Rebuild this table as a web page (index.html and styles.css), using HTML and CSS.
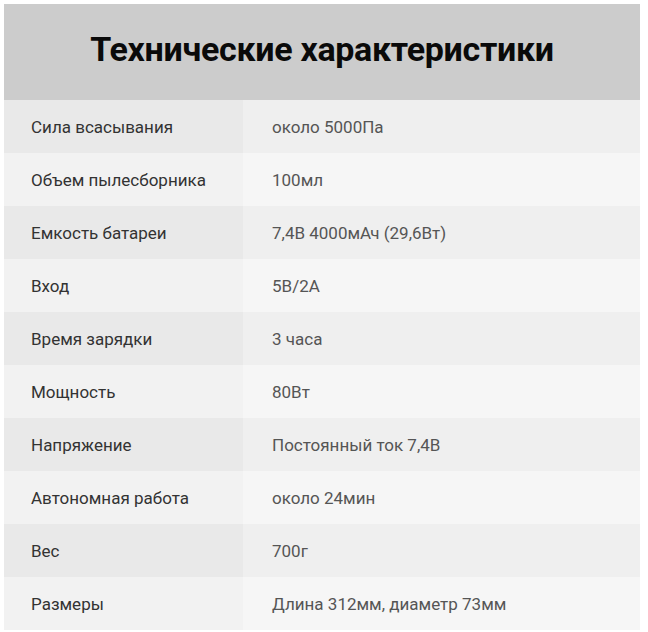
FILE: index.html
```html
<!DOCTYPE html>
<html lang="ru">
<head>
<meta charset="utf-8">
<title>Технические характеристики</title>
<link rel="stylesheet" href="styles.css">
</head>
<body>
<div class="specs">
  <div class="specs-head"><h1 class="specs-title">Технические характеристики</h1></div>
  <div class="row odd"><div class="key">Сила всасывания</div><div class="val">около 5000Па</div></div>
  <div class="row even"><div class="key">Объем пылесборника</div><div class="val">100мл</div></div>
  <div class="row odd"><div class="key">Емкость батареи</div><div class="val">7,4В 4000мАч (29,6Вт)</div></div>
  <div class="row even"><div class="key">Вход</div><div class="val">5В/2А</div></div>
  <div class="row odd"><div class="key">Время зарядки</div><div class="val">3 часа</div></div>
  <div class="row even"><div class="key">Мощность</div><div class="val">80Вт</div></div>
  <div class="row odd"><div class="key">Напряжение</div><div class="val">Постоянный ток 7,4В</div></div>
  <div class="row even"><div class="key">Автономная работа</div><div class="val">около 24мин</div></div>
  <div class="row odd"><div class="key">Вес</div><div class="val">700г</div></div>
  <div class="row even"><div class="key">Размеры</div><div class="val">Длина 312мм, диаметр 73мм</div></div>
</div>
</body>
</html>
```

FILE: styles.css
```css
html, body {
  margin: 0;
  padding: 0;
  background: #ffffff;
}
body {
  padding: 4px 8px 2px 4px;
  font-family: Roboto, "Noto Sans", sans-serif;
}
.specs {
  width: 636px;
}
.specs-head {
  height: 96px;
  box-sizing: border-box;
  padding-bottom: 6px;
  background: #cccccc;
  display: flex;
  align-items: center;
  justify-content: center;
}
.specs-title {
  margin: 0;
  font-size: 34px;
  font-weight: 700;
  color: #0a0a0a;
  letter-spacing: -0.3px;
}
.row {
  display: grid;
  grid-template-columns: 239px 1fr;
  height: 53px;
  font-size: 17px;
}
.key, .val {
  display: flex;
  align-items: center;
}
.key {
  padding-left: 27px;
  color: #333333;
}
.val {
  padding-left: 29px;
  color: #555555;
}
.odd .key { background: #e9e9e9; }
.odd .val { background: #efefef; }
.even .key { background: #f2f2f2; }
.even .val { background: #f6f6f6; }
```
